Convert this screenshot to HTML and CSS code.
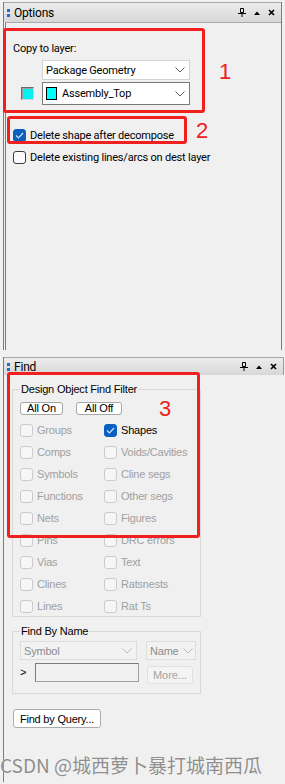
FILE: index.html
```html
<!DOCTYPE html>
<html lang="en">
<head>
    <meta charset="UTF-8">
    <title>Options / Find</title>
    <link rel="stylesheet" href="styles.css">
</head>
<body>

    <section class="panel options">
        <div class="titlebar">
            <span class="grip"></span>
            <span class="title">Options</span>
            <span class="tools">
                <svg width="8" height="9" viewBox="0 0 8 9"><path d="M2.5 0.5h3v4h-3z M0 5.5h8 M4 5.5v3.5" stroke="#000" fill="none"/></svg>
                <svg width="6" height="4" viewBox="0 0 6 4"><path d="M0 4L3 0.5 6 4z" fill="#000"/></svg>
                <svg width="7" height="7" viewBox="0 0 7 7"><path d="M1 1l5 5M6 1l-5 5" stroke="#000" stroke-width="1.6"/></svg>
            </span>
        </div>
        <div class="body">
            <div class="label">Copy to layer:</div>
            <div class="layer">
                <div class="combo first">
                    <span class="combo-text">Package Geometry</span>
                    <svg class="chev" width="10" height="6" viewBox="0 0 10 6"><path d="M0.5 0.5l4.5 4.5 4.5-4.5" fill="none" stroke="#606060"/></svg>
                </div>
                <span class="swatch"></span>
                <div class="combo active">
                    <span class="chip"></span>
                    <span class="combo-text">Assembly_Top</span>
                    <svg class="chev" width="10" height="6" viewBox="0 0 10 6"><path d="M0.5 0.5l4.5 4.5 4.5-4.5" fill="none" stroke="#606060"/></svg>
                </div>
            </div>
            <label class="check first-check">
                <span class="box on"><svg width="9" height="7" viewBox="0 0 9 7"><path d="M1 3.5l2.5 2.5 4.5-5" fill="none" stroke="#cfe3f7" stroke-width="1.2"/></svg></span>
                Delete shape after decompose
            </label>
            <label class="check">
                <span class="box"></span>
                Delete existing lines/arcs on dest layer
            </label>
        </div>
    </section>

    <section class="panel find">
        <div class="titlebar">
            <span class="grip"></span>
            <span class="title">Find</span>
            <span class="tools">
                <svg width="8" height="9" viewBox="0 0 8 9"><path d="M2.5 0.5h3v4h-3z M0 5.5h8 M4 5.5v3.5" stroke="#000" fill="none"/></svg>
                <svg width="6" height="4" viewBox="0 0 6 4"><path d="M0 4L3 0.5 6 4z" fill="#000"/></svg>
                <svg width="7" height="7" viewBox="0 0 7 7"><path d="M1 1l5 5M6 1l-5 5" stroke="#000" stroke-width="1.6"/></svg>
            </span>
        </div>
        <div class="body">
            <fieldset class="group filter">
                <legend>Design Object Find Filter</legend>
                <div class="btn-row">
                    <button class="small-btn all-on">All On</button>
                    <button class="small-btn all-off">All Off</button>
                </div>
                <div class="grid">
                    <span class="item"><span class="box off"></span>Groups</span>
                    <span class="item enabled"><span class="box on"><svg width="9" height="7" viewBox="0 0 9 7"><path d="M1 3.5l2.5 2.5 4.5-5" fill="none" stroke="#cfe3f7" stroke-width="1.2"/></svg></span>Shapes</span>
                    <span class="item"><span class="box off"></span>Comps</span>
                    <span class="item"><span class="box off"></span>Voids/Cavities</span>
                    <span class="item"><span class="box off"></span>Symbols</span>
                    <span class="item"><span class="box off"></span>Cline segs</span>
                    <span class="item"><span class="box off"></span>Functions</span>
                    <span class="item"><span class="box off"></span>Other segs</span>
                    <span class="item"><span class="box off"></span>Nets</span>
                    <span class="item"><span class="box off"></span>Figures</span>
                    <span class="item"><span class="box off"></span>Pins</span>
                    <span class="item"><span class="box off"></span>DRC errors</span>
                    <span class="item"><span class="box off"></span>Vias</span>
                    <span class="item"><span class="box off"></span>Text</span>
                    <span class="item"><span class="box off"></span>Clines</span>
                    <span class="item"><span class="box off"></span>Ratsnests</span>
                    <span class="item"><span class="box off"></span>Lines</span>
                    <span class="item"><span class="box off"></span>Rat Ts</span>
                </div>
            </fieldset>

            <fieldset class="group by-name">
                <legend>Find By Name</legend>
                <div class="name-row">
                    <div class="combo dim symbol">
                        <span class="combo-text">Symbol</span>
                        <svg class="chev" width="10" height="6" viewBox="0 0 10 6"><path d="M0.5 0.5l4.5 4.5 4.5-4.5" fill="none" stroke="#b8b8b8"/></svg>
                    </div>
                    <div class="combo dim name">
                        <span class="combo-text">Name</span>
                        <svg class="chev" width="10" height="6" viewBox="0 0 10 6"><path d="M0.5 0.5l4.5 4.5 4.5-4.5" fill="none" stroke="#b8b8b8"/></svg>
                    </div>
                </div>
                <div class="name-row second">
                    <span class="caret">&gt;</span>
                    <span class="textbox"></span>
                    <button class="more-btn">More...</button>
                </div>
            </fieldset>

            <button class="query-btn">Find by Query...</button>
        </div>
    </section>

    <!-- annotations drawn over the screenshot -->
    <div class="mark mark-1"></div>
    <div class="mark mark-2"></div>
    <div class="mark mark-3"></div>
    <span class="mark-num num-1">1</span>
    <span class="mark-num num-2">2</span>
    <span class="mark-num num-3">3</span>

    <div class="watermark">CSDN @城西萝卜暴打城南西瓜</div>

</body>
</html>
```

FILE: styles.css
```css
body {
    margin: 0;
    height: 784px;
    overflow: hidden;
    position: relative;
    background-color: #f0f0f0;
    font-family: Roboto, "Liberation Sans", sans-serif;
    font-size: 11px;
    letter-spacing: -0.2px;
    color: #000;
}
.panel {
    margin-left: 3px;
    width: 279px;
    border-left: 1px solid #7c7c7c;
    border-right: 1px solid #7c7c7c;
}
.options {
    margin-top: 2px;
    height: 348px;
    box-sizing: border-box;
    display: flex;
    flex-direction: column;
}
.find {
    margin-top: 7px;
    height: 425px;
    display: flex;
    flex-direction: column;
    border-right-color: transparent;
}
.titlebar {
    height: 19px;
    flex-shrink: 0;
    border-top: 1px solid #a8a8a8;
    background: linear-gradient(#ececec, #d7d7d7);
    display: flex;
    align-items: center;
    padding: 0 6px 0 3px;
}
.find .titlebar {
    height: 17px;
    margin-right: -1px;
    border-right: 1px solid #9a9a9a;
}
.grip {
    width: 3px;
    height: 8px;
    background: linear-gradient(#1a6fd4 0 3px, transparent 3px 5px, #1a6fd4 5px);
}
.title {
    margin-left: 4px;
    font-size: 12px;
}
.tools {
    margin-left: auto;
    display: flex;
    align-items: center;
    gap: 8px;
}
.tools svg {
    display: block;
}
.options .body {
    flex: 1;
    margin-left: 1px;
    border-left: 1px solid #7c7c7c;
    border-top: 1px solid #a8a8a8;
    padding: 18px 0 0 7px;
}
.label {
    line-height: 15px;
}
.layer {
    display: grid;
    grid-template-columns: 29px 148px;
    grid-template-rows: 20px 23px;
    row-gap: 2px;
    margin-top: 4px;
}
.layer .first {
    grid-column: 2;
}
.combo {
    box-sizing: border-box;
    display: flex;
    align-items: center;
    padding-left: 3px;
    background: #fff;
    border: 1px solid #d2d2d2;
}
.combo .chev {
    margin-left: auto;
    margin-right: 4px;
}
.combo.active {
    border-color: #7a7a7a;
}
.chip {
    width: 9px;
    height: 11px;
    border: 1px solid #000;
    background: #00ffff;
    margin-right: 5px;
}
.swatch {
    align-self: center;
    margin-left: 8px;
    width: 13px;
    height: 13px;
    box-sizing: border-box;
    border: 1px solid;
    border-color: #6a6a6a #d4d4d4 #d4d4d4 #6a6a6a;
    box-shadow: inset 1px 1px #a0a0a0;
    background: #00f2f2;
}
.check {
    display: flex;
    align-items: center;
    gap: 4px;
    height: 16px;
    margin-top: 6px;
}
.first-check {
    margin-top: 22px;
}
.box {
    width: 13px;
    height: 13px;
    box-sizing: border-box;
    border: 1px solid #3c3c3c;
    border-radius: 3px;
    background: #fafafa;
    display: flex;
    align-items: center;
    justify-content: center;
    flex-shrink: 0;
}
.box.on {
    background: #0a5fc0;
    border-color: #0a5fc0;
}
.box.off {
    border-color: #cbcbcb;
    background: #f6f6f6;
}

/* --- Find panel --- */
.find .body {
    flex: 1;
    padding-top: 8px;
    font-family: "Liberation Sans", Arial, sans-serif;
    font-size: 11px;
}
.group {
    margin: 0 0 0 8px;
    width: 189px;
    box-sizing: border-box;
    border: 1px solid #d9d9d9;
    padding: 6px 7px 2px;
}
.group legend {
    padding: 0 1px;
    line-height: 13px;
}
.btn-row {
    display: flex;
    gap: 13px;
}
.small-btn {
    height: 13px;
    padding: 0;
    font: 11px/11px "Liberation Sans", Arial, sans-serif;
    letter-spacing: -0.2px;
    background: #fff;
    border: 1px solid #a6a6a6;
    border-radius: 3px;
}
.all-on {
    width: 43px;
}
.all-off {
    width: 46px;
}
.grid {
    margin-top: 7px;
    display: grid;
    grid-template-columns: 84px auto;
    grid-auto-rows: 16px;
    row-gap: 6px;
}
.item {
    display: flex;
    align-items: center;
    gap: 4px;
    color: #a0a0a0;
}
.item.enabled {
    color: #000;
}
.by-name {
    margin-top: 8px;
    padding: 3px 4px 9px 7px;
}
.name-row {
    display: flex;
    gap: 9px;
}
.combo.dim {
    height: 19px;
    background: #f2f2f2;
    border-color: #dddddd;
    color: #8c8c8c;
    padding-left: 3px;
}
.symbol {
    width: 117px;
}
.name {
    width: 50px;
}
.name .chev {
    margin-right: 2px;
}
.name-row.second {
    margin-top: 3px;
    gap: 0;
    align-items: flex-start;
}
.caret {
    width: 15px;
    line-height: 19px;
    color: #000;
}
.textbox {
    width: 104px;
    height: 19px;
    box-sizing: border-box;
    border: 1px solid #a0a0a0;
    border-top-color: #7c7c7c;
    border-left-color: #7c7c7c;
    background: #f0f0f0;
}
.more-btn {
    margin: 3px 0 0 8px;
    width: 46px;
    height: 18px;
    padding: 0;
    font: 11px "Liberation Sans", Arial, sans-serif;
    color: #a3a3a3;
    background: #f4f4f4;
    border: 1px solid #e0e0e0;
    border-radius: 3px;
}
.query-btn {
    display: block;
    margin: 15px 0 0 9px;
    width: 88px;
    height: 19px;
    padding: 0;
    font: 11px "Liberation Sans", Arial, sans-serif;
    letter-spacing: -0.2px;
    color: #000;
    background: #fff;
    border: 1px solid #adadad;
    border-radius: 3px;
}

/* --- red annotations --- */
.mark {
    position: absolute;
    box-sizing: border-box;
    border: 3px solid #f0201e;
    border-radius: 3px;
}
.mark-1 {
    left: 3px;
    top: 28px;
    width: 202px;
    height: 85px;
}
.mark-2 {
    left: 7px;
    top: 116px;
    width: 180px;
    height: 28px;
}
.mark-3 {
    left: 7px;
    top: 372px;
    width: 193px;
    height: 166px;
}
.mark-num {
    position: absolute;
    font-family: "Liberation Sans", sans-serif;
    font-size: 22px;
    line-height: 22px;
    letter-spacing: 0;
    color: #f0201e;
}
.num-1 {
    left: 219px;
    top: 61px;
}
.num-2 {
    left: 196px;
    top: 120px;
}
.num-3 {
    left: 159px;
    top: 398px;
}
.watermark {
    position: absolute;
    left: 0;
    top: 755px;
    font-family: "Noto Sans CJK SC", sans-serif;
    font-size: 19px;
    line-height: 19px;
    letter-spacing: 0;
    color: #8e8e8e;
    text-shadow: 0 0 1px #fff;
    white-space: nowrap;
}
```
